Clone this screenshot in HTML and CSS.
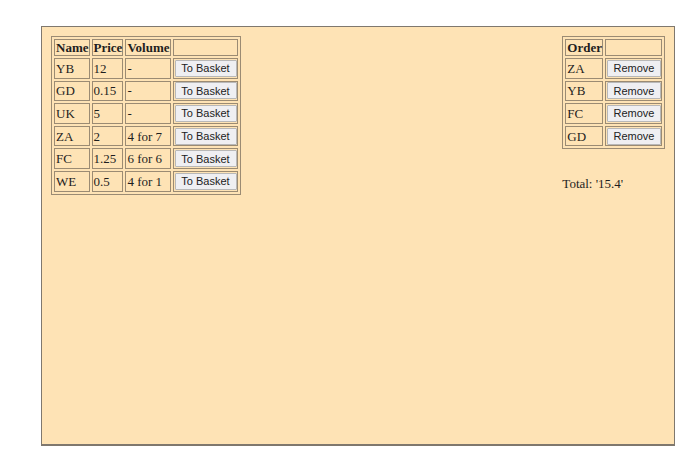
FILE: index.html
```html
<!DOCTYPE html>
<html>
<head>
<meta charset="utf-8">
<link rel="stylesheet" href="styles.css">
</head>
<body>
<div class="shop">
  <table class="grid products">
    <tr><th>Name</th><th>Price</th><th>Volume</th><th></th></tr>
    <tr><td>YB</td><td>12</td><td>-</td><td><button class="btn basket">To Basket</button></td></tr>
    <tr><td>GD</td><td>0.15</td><td>-</td><td><button class="btn basket">To Basket</button></td></tr>
    <tr><td>UK</td><td>5</td><td>-</td><td><button class="btn basket">To Basket</button></td></tr>
    <tr><td>ZA</td><td>2</td><td>4 for 7</td><td><button class="btn basket">To Basket</button></td></tr>
    <tr><td>FC</td><td>1.25</td><td>6 for 6</td><td><button class="btn basket">To Basket</button></td></tr>
    <tr><td>WE</td><td>0.5</td><td>4 for 1</td><td><button class="btn basket">To Basket</button></td></tr>
  </table>
  <div class="order">
    <table class="grid">
      <tr><th>Order</th><th></th></tr>
      <tr><td>ZA</td><td><button class="btn remove">Remove</button></td></tr>
      <tr><td>YB</td><td><button class="btn remove">Remove</button></td></tr>
      <tr><td>FC</td><td><button class="btn remove">Remove</button></td></tr>
      <tr><td>GD</td><td><button class="btn remove">Remove</button></td></tr>
    </table>
    <p class="total">Total: '15.4'</p>
  </div>
</div>
</body>
</html>
```
FILE: styles.css
```css
html, body {
  margin: 0;
  padding: 0;
  background: #ffffff;
}
body {
  padding: 26px 18px 0 41px;
  font-family: "Liberation Serif", "Times New Roman", serif;
  font-size: 13px;
  color: #1e1e1e;
}
.shop {
  box-sizing: border-box;
  width: 634px;
  height: 420px;
  background: #fee3b5;
  border: 1px solid #7f786e;
  border-bottom-width: 2px;
  padding: 9px 9px 9px 9px;
  display: flex;
  justify-content: space-between;
  align-items: flex-start;
}
.grid {
  border-collapse: separate;
  border-spacing: 2px;
  border: 1px solid #9b8b73;
}
.grid th, .grid td {
  border: 1px solid #9b8b73;
  padding: 0 0 0 1px;
  text-align: left;
  line-height: 15px;
  height: 15px;
  white-space: nowrap;
}
.grid th {
  font-weight: bold;
}
.grid td {
  height: 18.6px;
}
.btn {
  display: block;
  box-sizing: border-box;
  height: 17px;
  margin: 0;
  padding: 0;
  font-family: "Liberation Sans", Arial, sans-serif;
  font-size: 11px;
  color: #222;
  background: #efeff2;
  border: 1px solid #b8b8b8;
  border-radius: 1px;
}
.basket {
  width: 62px;
}
.remove {
  width: 54px;
}
.order {
  display: flex;
  flex-direction: column;
  margin-right: 0;
}
.total {
  margin: 27px 0 0 0;
  font-size: 13px;
}
```
